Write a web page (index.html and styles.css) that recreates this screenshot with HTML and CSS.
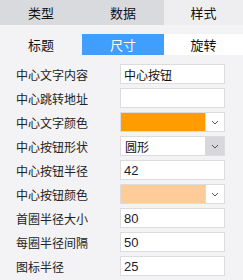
FILE: index.html
```html
<!DOCTYPE html>
<html lang="zh">
<head>
<meta charset="utf-8">
<link rel="stylesheet" href="styles.css">
</head>
<body>
<div class="panel">
  <div class="tabs main-tabs">
    <div class="tab">类型</div>
    <div class="tab">数据</div>
    <div class="tab active">样式</div>
  </div>
  <div class="tabs sub-tabs">
    <div class="tab">标题</div>
    <div class="tab active">尺寸</div>
    <div class="tab plain">旋转</div>
  </div>
  <div class="form">
    <div class="row"><span class="label">中心文字内容</span><div class="field">中心按钮</div></div>
    <div class="row"><span class="label">中心跳转地址</span><div class="field"></div></div>
    <div class="row"><span class="label">中心文字颜色</span>
      <div class="field color"><span class="swatch orange"></span><span class="btn"><svg width="8" height="5" viewBox="0 0 8 5"><path d="M1 1 L4 4 L7 1" fill="none" stroke="#555" stroke-width="1"/></svg></span></div>
    </div>
    <div class="row"><span class="label">中心按钮形状</span>
      <div class="field select"><span class="val">圆形</span><span class="btn grey"><svg width="8" height="5" viewBox="0 0 8 5"><path d="M1 1 L4 4 L7 1" fill="none" stroke="#555" stroke-width="1"/></svg></span></div>
    </div>
    <div class="row"><span class="label">中心按钮半径</span><div class="field num">42</div></div>
    <div class="row"><span class="label">中心按钮颜色</span>
      <div class="field color"><span class="swatch peach"></span><span class="btn"><svg width="8" height="5" viewBox="0 0 8 5"><path d="M1 1 L4 4 L7 1" fill="none" stroke="#555" stroke-width="1"/></svg></span></div>
    </div>
    <div class="row"><span class="label">首圈半径大小</span><div class="field num">80</div></div>
    <div class="row"><span class="label">每圈半径间隔</span><div class="field num">50</div></div>
    <div class="row"><span class="label">图标半径</span><div class="field num">25</div></div>
  </div>
</div>
</body>
</html>
```
FILE: styles.css
```css
html, body {
  margin: 0;
  padding: 0;
  background: #f3f3f5;
}
body {
  font-family: "Noto Sans CJK SC", "Liberation Sans", sans-serif;
  font-size: 12px;
  color: #222;
}
.panel {
  width: 243px;
  height: 280px;
  overflow: hidden;
}
.tabs {
  display: grid;
  grid-template-columns: 82px 82px 1fr;
}
.main-tabs {
  height: 25px;
  background: #d9dadd;
}
.main-tabs .tab {
  display: flex;
  align-items: center;
  justify-content: center;
  color: #111;
  font-size: 13px;
}
.main-tabs .tab.active {
  background: #eeeef1;
}
.sub-tabs {
  margin-top: 9px;
  height: 21px;
}
.sub-tabs .tab {
  display: flex;
  align-items: center;
  justify-content: center;
  color: #111;
  font-size: 13px;
}
.sub-tabs .tab.active {
  background: #409eff;
  color: #fff;
}
.sub-tabs .tab.plain {
  background: #fff;
}
.form {
  margin-top: 9px;
  display: flex;
  flex-direction: column;
  gap: 4px;
  padding-left: 16px;
}
.row {
  display: flex;
  align-items: center;
  height: 20px;
}
.label {
  width: 104px;
  font-size: 12px;
  color: #222;
}
.field {
  box-sizing: border-box;
  width: 105px;
  height: 20px;
  border: 1px solid #dcdcdf;
  background: #fff;
  padding-left: 3px;
  display: flex;
  align-items: center;
  font-size: 12px;
  color: #111;
}
.field.num {
  font-family: "Liberation Sans", sans-serif;
  font-size: 13px;
  color: #1c1c30;
}
.field.color {
  padding-left: 0;
}
.swatch {
  flex: 1;
  height: 100%;
}
.swatch.orange { background: #ff9c00; }
.swatch.peach { background: #ffcc99; }
.btn {
  width: 19px;
  height: 100%;
  box-sizing: border-box;
  border-left: 1px solid #dcdcdf;
  display: flex;
  align-items: center;
  justify-content: center;
  background: #fff;
}
.field.select {
  padding-left: 0;
}
.val {
  flex: 1;
  padding-left: 4px;
}
.btn.grey {
  background: #d8d8dc;
  border-left: none;
}
```
